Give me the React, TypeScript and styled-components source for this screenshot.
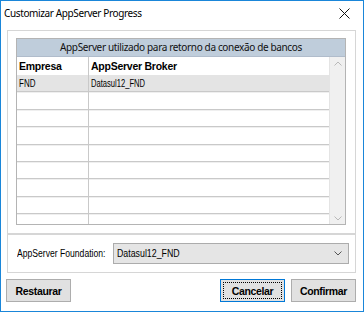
import React from "react";
import styled, { createGlobalStyle, css } from "styled-components";

const GlobalStyle = createGlobalStyle`
  html, body {
    margin: 0;
    padding: 0;
    background: #ffffff;
  }
  * {
    box-sizing: border-box;
  }
`;

const Window = styled.div`
  width: 364px;
  height: 312px;
  border: 1px solid #1a86d9;
  background: #f0f0f0;
  display: flex;
  flex-direction: column;
  overflow: hidden;
`;

const TitleBar = styled.div`
  height: 29px;
  background: #ffffff;
  display: flex;
  align-items: center;
  justify-content: space-between;
  padding: 0 13px 5px 3px;
`;

const Title = styled.div`
  font-family: "Noto Sans", "Open Sans", sans-serif;
  font-size: 10px;
  letter-spacing: -0.38px;
  color: #000;
`;

const Body = styled.div`
  flex: 1;
  display: flex;
  flex-direction: column;
  padding: 0 7px 0 6px;
  background: #ffffff;
`;

const Panel = styled.div<{ $compact?: boolean }>`
  background: #ffffff;
  border: 1px solid #d6d6d6;
  ${(p) =>
    p.$compact
      ? css`
          height: 39px;
          display: flex;
          align-items: center;
          padding: 0 6px 0 9px;
          gap: 4px;
        `
      : css`
          height: 204px;
          padding: 7px 9px 8px 8px;
        `}
`;

const Table = styled.div`
  height: 187px;
  border: 1px solid #b4b4b4;
  display: flex;
  flex-direction: column;
  overflow: hidden;
  background: #ffffff;
`;

const TableCaption = styled.div`
  height: 18px;
  flex: none;
  background: #bfcddb;
  border-bottom: 1px solid #b0bccb;
  text-align: center;
  font-family: "Noto Sans", "Open Sans", sans-serif;
  font-size: 10px;
  letter-spacing: -0.35px;
  line-height: 16px;
  color: #111;
`;

const TableBody = styled.div`
  flex: 1;
  display: flex;
  min-height: 0;
`;

const Rows = styled.div`
  flex: 1;
  display: flex;
  flex-direction: column;
  overflow: hidden;
`;

const Row = styled.div<{ $head?: boolean; $selected?: boolean }>`
  display: grid;
  grid-template-columns: 71px 1fr;
  flex: none;
  height: ${(p) => (p.$head ? "18px" : "17.4px")};
  background: ${(p) => (p.$selected ? "#e4e4e4" : "#ffffff")};
  border-bottom: ${(p) => (p.$head ? "none" : "1px solid #c9c9c9")};
  box-shadow: ${(p) => (p.$head || p.$selected ? "none" : "inset 0 1px #efefef")};
`;

const Cell = styled.div<{ $head?: boolean }>`
  font-family: "Liberation Sans", Arial, sans-serif;
  font-size: ${(p) => (p.$head ? "10.5px" : "10px")};
  font-weight: ${(p) => (p.$head ? 700 : 400)};
  letter-spacing: ${(p) => (p.$head ? "-0.25px" : "0")};
  color: #000;
  padding: 0 2px;
  display: flex;
  align-items: center;
  white-space: nowrap;
  & + & {
    border-left: 1px solid #c9c9c9;
  }
`;

// the old dialog font is much narrower than Arial, so squeeze the glyphs
const Squeeze = styled.span<{ $scale: number }>`
  display: inline-block;
  white-space: nowrap;
  transform: scaleX(${(p) => p.$scale});
  transform-origin: left center;
`;

const ScrollBar = styled.div`
  width: 16px;
  flex: none;
  background: #f0f0f0;
  border-left: 1px solid #e4e4e4;
  display: flex;
  flex-direction: column;
  justify-content: space-between;
  align-items: center;
  padding: 4px 0 3px;
`;

const Label = styled.div`
  width: 92px;
  flex: none;
  font-family: "Liberation Sans", Arial, sans-serif;
  font-size: 10px;
  color: #000;
`;

const Select = styled.div`
  flex: 1;
  height: 21px;
  background: #e5e5e5;
  border: 1px solid #acacac;
  display: flex;
  align-items: center;
  justify-content: space-between;
  padding: 0 6px 0 3px;
  font-family: "Liberation Sans", Arial, sans-serif;
  font-size: 10px;
  color: #000;
`;

const ButtonRow = styled.div`
  display: flex;
  align-items: center;
  gap: 6px;
  padding-top: 6px;
  margin-left: -1px;
`;

const Spacer = styled.div`
  flex: 1;
`;

const Button = styled.button<{ $focused?: boolean }>`
  width: 65px;
  height: 23px;
  padding: 0;
  background: #e1e1e1;
  border: 1px solid ${(p) => (p.$focused ? "#0078d7" : "#adadad")};
  font-family: "Liberation Sans", Arial, sans-serif;
  font-size: 10.5px;
  font-weight: 700;
  letter-spacing: -0.35px;
  color: #000;
  position: relative;
  ${(p) =>
    p.$focused &&
    css`
      &::after {
        content: "";
        position: absolute;
        inset: 2px;
        border: 1px dotted #000;
      }
    `}
`;

const Chevron = ({ up, color }: { up?: boolean; color: string }) => (
  <svg width="8" height="5" viewBox="0 0 8 5">
    <path
      d={up ? "M0.5 4.5 L4 1 L7.5 4.5" : "M0.5 0.5 L4 4 L7.5 0.5"}
      fill="none"
      stroke={color}
      strokeWidth="1"
    />
  </svg>
);

const CloseIcon = () => (
  <svg width="11" height="11" viewBox="0 0 11 11">
    <path d="M0.5 0.5 L10.5 10.5 M10.5 0.5 L0.5 10.5" stroke="#111" strokeWidth="1" />
  </svg>
);

const rows = [
  { empresa: "FND", broker: "Datasul12_FND" },
  ...Array.from({ length: 8 }, () => ({ empresa: "", broker: "" })),
];

export default function App() {
  return (
    <>
      <GlobalStyle />
      <Window>
        <TitleBar>
          <Title>Customizar AppServer Progress</Title>
          <CloseIcon />
        </TitleBar>
        <Body>
          <Panel>
            <Table>
              <TableCaption>AppServer utilizado para retorno da conexão de bancos</TableCaption>
              <TableBody>
                <Rows>
                  <Row $head>
                    <Cell $head>Empresa</Cell>
                    <Cell $head>AppServer Broker</Cell>
                  </Row>
                  {rows.map((r, i) => (
                    <Row key={i} $selected={i === 0}>
                      <Cell>
                        <Squeeze $scale={0.8}>{r.empresa}</Squeeze>
                      </Cell>
                      <Cell>
                        <Squeeze $scale={0.76}>{r.broker}</Squeeze>
                      </Cell>
                    </Row>
                  ))}
                </Rows>
                <ScrollBar>
                  <Chevron up color="#b9b9b9" />
                  <Chevron color="#b9b9b9" />
                </ScrollBar>
              </TableBody>
            </Table>
          </Panel>
          <Panel $compact>
            <Label>
              <Squeeze $scale={0.86}>AppServer Foundation:</Squeeze>
            </Label>
            <Select>
              <Squeeze $scale={0.88}>Datasul12_FND</Squeeze>
              <Chevron color="#555" />
            </Select>
          </Panel>
          <ButtonRow>
            <Button>Restaurar</Button>
            <Spacer />
            <Button $focused>Cancelar</Button>
            <Button>Confirmar</Button>
          </ButtonRow>
        </Body>
      </Window>
    </>
  );
}
